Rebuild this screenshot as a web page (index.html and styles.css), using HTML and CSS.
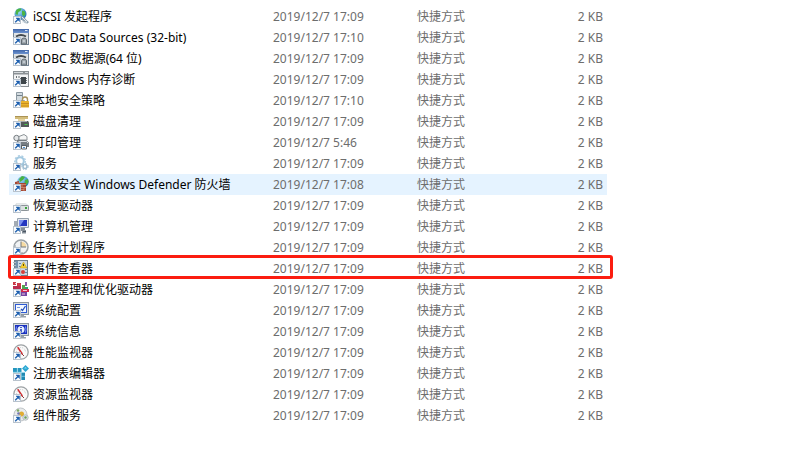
FILE: index.html
```
<!DOCTYPE html>
<html lang="zh-CN">
<head>
  <meta charset="UTF-8" />
  <meta name="viewport" content="width=device-width, initial-scale=1.0"/>
  <title>管理工具</title>
  <link rel="stylesheet" href="styles.css">
</head>
<body>

  <!-- Icon set -->
  <svg class="icon-set" aria-hidden="true">
    <defs>
      <linearGradient id="titleBlue" x1="0" y1="0" x2="0" y2="1">
        <stop offset="0" stop-color="#3f66aa"/>
        <stop offset="1" stop-color="#6d93cf"/>
      </linearGradient>
      <radialGradient id="globeFill" cx="35%" cy="30%" r="75%">
        <stop offset="0" stop-color="#a6e4f7"/>
        <stop offset="1" stop-color="#1468b8"/>
      </radialGradient>
      <symbol id="arrow" viewBox="0 0 16 16">
        <rect x="0.5" y="8.5" width="7" height="7" fill="#f9fbfd" stroke="#b9c3cd"/>
        <path d="M3 10h3.500v3.500z" fill="#1d5fae" stroke="#1d5fae" stroke-width="0.500"/>
        <path d="M5.200 11.300L2.200 14.300" stroke="#1d5fae" stroke-width="1.300"/>
      </symbol>
      <symbol id="iscsi" viewBox="0 0 16 16">
        <circle cx="7.500" cy="6" r="6" fill="url(#globeFill)"/>
        <path d="M3 2.500C4.500.8 7 .2 8.500.8L7.500 3 5.500 4l-1 3-2-1zM9 2.500l3 1 .5 3-2 2-1.500-2z" fill="#4cb544"/>
        <path d="M8 8l3 1 3 3.500 2 1.500-1.500 1.500-3-.500L9 12z" fill="#8da0ae"/>
        <path d="M9 9l5 5M9 14h5" stroke="#e1e9ef"/>
      </symbol>
      <symbol id="odbc" viewBox="0 0 16 16">
        <rect x="0.5" y="0.5" width="15" height="15" fill="#dfe3e6" stroke="#768797"/>
        <path d="M0 0h16v4H0z" fill="url(#titleBlue)"/>
        <path d="M12 1.500h2.500" stroke="#dbe7f8"/>
        <path d="M3 7.500q5-3 10 0" fill="none" stroke="#41484d" stroke-width="1.800"/>
        <path d="M8.500 15v-4q0-2 2.500-2t2.500 2v4z" fill="#9ea7ae" stroke="#616a71"/>
        <path d="M10 12h2" stroke="#e6eaed"/>
      </symbol>
      <symbol id="memory" viewBox="0 0 16 16">
        <rect x="0.5" y="0.5" width="15" height="15" fill="#f3f4f5" stroke="#8b9094"/>
        <path d="M0 0h16v3.500H0z" fill="#8b9195"/>
        <path d="M1 1.500h9M12 1.500h3" stroke="#d5d9dc"/>
        <path d="M3.500 5v2M6 5v2" stroke="#6a7276"/>
        <path d="M8 6h5v7H8z" fill="#3f464a"/>
        <path d="M7 7.500h1M7 9.500h1M13 7.500h1M13 9.500h1M13 11.500h1" stroke="#6d7478"/>
      </symbol>
      <symbol id="policy" viewBox="0 0 16 16">
        <path d="M3.500.5h6v8h-6z" fill="#d3dbe0" stroke="#8d9aa3"/>
        <path d="M4 3.500h5" stroke="#73818b"/>
        <path d="M1.500 8.500h10V13h-10z" fill="#b5c0c7" stroke="#93a0a8"/>
        <path d="M9.500 10V7.500a2.500 2.500 0 0 1 5 0V10" fill="none" stroke="#a7925c" stroke-width="1.400"/>
        <rect x="8" y="9" width="8" height="6.500" rx="0.5" fill="#e9b22b"/>
        <path d="M8 11.500h8M8 14h8" stroke="#c58e22"/>
      </symbol>
      <symbol id="cleanup" viewBox="0 0 16 16">
        <path d="M2 3h13v3H2z" fill="#d3bd7b"/>
        <path d="M2 3.500h13" stroke="#ab9354"/>
        <path d="M5 6h7v3H5z" fill="#e4d3a0"/>
        <path d="M1 8h14l1 1.500V14H0V9.500z" fill="#53595a"/>
        <path d="M2 8.500h12" stroke="#a5abab"/>
        <path d="M11.500 11.500h3" stroke="#4bc84b"/>
      </symbol>
      <symbol id="printer" viewBox="0 0 16 16">
        <circle cx="3.500" cy="4" r="2.700" fill="#e3e6e8" stroke="#757c80"/>
        <path d="M6 2.500L11 .5l3 2V6H6z" fill="#f5f6f6" stroke="#8c9397"/>
        <path d="M4 6h9l3 2.500V13H4z" fill="#777e83"/>
        <path d="M5.500 7.500h8l1.500 1.500" fill="none" stroke="#d9dde0"/>
        <path d="M8.500 11.500h5v3.500h-5z" fill="#f6f7f7" stroke="#555d63"/>
        <path d="M10 13.500h2" stroke="#4a92d6"/>
      </symbol>
      <symbol id="services" viewBox="0 0 16 16">
        <circle cx="7" cy="6" r="3.800" fill="#fff" stroke="#a4c9e0" stroke-width="2"/>
        <circle cx="7" cy="6" r="5.300" fill="none" stroke="#a4c9e0" stroke-width="1.200" stroke-dasharray="2 1.700"/>
        <circle cx="12" cy="11.500" r="2" fill="#fff" stroke="#9fbdd1" stroke-width="1.500"/>
        <circle cx="12" cy="11.500" r="3.200" fill="none" stroke="#9fbdd1" stroke-dasharray="1.500 1.500"/>
      </symbol>
      <symbol id="firewall" viewBox="0 0 16 16">
        <circle cx="10" cy="5.700" r="5.700" fill="url(#globeFill)"/>
        <path d="M6 3l3-3 3 1-2 3-3 2zM12 4l3-1 .5 3-2 3-2-2z" fill="#49b343"/>
        <path d="M2 6l4-1v2h7v8H2z" fill="#a34733"/>
        <path d="M2 8.500h11M8 11.500h5M5 6v2M9 8.500v3M11 11.500V15M8 13.500h3" stroke="#d8977e" stroke-width="0.700"/>
      </symbol>
      <symbol id="recovery" viewBox="0 0 16 16">
        <path d="M3 6.500h10l3 2.500v5H2V9z" fill="#bdc4c7"/>
        <path d="M3.500 6.500H13l2 2H3z" fill="#e8ebec"/>
        <rect x="7.500" y="8.500" width="8" height="5" rx="1" fill="#dadfe0" stroke="#8c9498"/>
        <path d="M12 10h2v2h-2z" fill="#39a33c"/>
      </symbol>
      <symbol id="computer" viewBox="0 0 16 16">
        <path d="M1 3h4v6H1z" fill="#a4acb5"/>
        <path d="M4.500.5h11v9h-11z" fill="#e4e9ee" stroke="#98a4b0"/>
        <path d="M6 2h8v6H6z" fill="#2437c0"/>
        <path d="M6 2h5L7 8H6z" fill="#7a90ee"/>
        <path d="M8 10h4v2h1v3.500H9V13H8z" fill="#848d97"/>
        <path d="M10 13.500h3" stroke="#495562"/>
      </symbol>
      <symbol id="scheduler" viewBox="0 0 16 16">
        <circle cx="8" cy="8" r="7" fill="#f1f3f4" stroke="#9aa1a6" stroke-width="1.500"/>
        <path d="M8 2.500a5.500 5.500 0 0 1 5.500 5.500H8z" fill="#f6dba3"/>
        <path d="M8 2.500V8h5" fill="none" stroke="#70777c"/>
        <path d="M9 13v1M3 7H2" stroke="#8c969d"/>
      </symbol>
      <symbol id="events" viewBox="0 0 16 16">
        <rect x="1.500" y="0.500" width="13" height="15" fill="#ccd8e3" stroke="#72818e"/>
        <path d="M2 1h3v8H2z" fill="#7491ad"/>
        <path d="M0 2.500h3M0 5.500h3" stroke="#b5bfc7"/>
        <path d="M6 3.500h2M6 6.500h2M12 9.500h2M12 12.500h2" stroke="#6386a8"/>
        <path d="M10.500 2l3.500 6H7z" fill="#f6ce2c" stroke="#bd9d22" stroke-width="0.500"/>
        <path d="M10.500 4v2" stroke="#55460a"/>
        <circle cx="10" cy="12" r="2" fill="#d6403a"/>
      </symbol>
      <symbol id="defrag" viewBox="0 0 16 16">
        <path d="M0 1h3v3H0zM4 2h4v3H4z" fill="#cc3947"/>
        <path d="M0 5h8v3H0z" fill="#b92c4e"/>
        <path d="M9 4h3v4H9z" fill="#54a54c"/>
        <path d="M12 1h2v4h-2z" fill="#8b5aa9"/>
        <path d="M8 8h8v3H8z" fill="#d42d4d"/>
        <path d="M12 6h3v2h-3z" fill="#32a06e"/>
        <path d="M8 11h6v4H8z" fill="#7547a5"/>
        <path d="M10 9.500h4M2 2.500h1M9 13h3" stroke="#f0c8d6"/>
      </symbol>
      <symbol id="config" viewBox="0 0 16 16">
        <rect x="0.5" y="0.5" width="15" height="12" fill="#d7dde2" stroke="#8d979f"/>
        <rect x="2.500" y="2.500" width="11" height="8" fill="#f5faff" stroke="#2f5bd3"/>
        <path d="M8 7l1.500 1.500L12.500 4" fill="none" stroke="#2451bd" stroke-width="1.300"/>
        <path d="M4 5.500h3" stroke="#7598e0"/>
        <path d="M8 13h3v1h2v1.500H8z" fill="#98a2aa"/>
      </symbol>
      <symbol id="info" viewBox="0 0 16 16">
        <rect x="0.5" y="0.5" width="15" height="12" fill="#d7dde2" stroke="#8d979f"/>
        <path d="M2 2h12v9H2z" fill="#1930bd"/>
        <circle cx="8" cy="6.500" r="3.500" fill="#e6efff"/>
        <path d="M8 4v1M8 6v3.500" stroke="#1737b7" stroke-width="1.500"/>
        <path d="M3.500 3.500q-1 3 0 6M12.500 3.500q1 3 0 6" fill="none" stroke="#7f9af5"/>
        <path d="M8 13h3v1h2v1.500H8z" fill="#98a2aa"/>
      </symbol>
      <symbol id="gauge" viewBox="0 0 16 16">
        <circle cx="8" cy="8" r="7.200" fill="#fafafa" stroke="#9da2a5" stroke-width="1.300"/>
        <path d="M3.500 8a4.500 4.500 0 0 1 9 0" fill="none" stroke="#c3c8ca" stroke-dasharray="1 1"/>
        <path d="M4 3.500l1.500-.5L10 9.500 8.500 10.500z" fill="#cf2f34"/>
        <path d="M9 10l2 2" stroke="#8b3738"/>
      </symbol>
      <symbol id="registry" viewBox="0 0 16 16">
        <path d="M0 3h4v4H0zM4.500 3h4v4h-4z" fill="#2596be"/>
        <path d="M0 7.500h12V15H0z" fill="#2189b2"/>
        <path d="M0 7.300h12M8.300 11.300H12M4.300 3v5M8.300 7v8" stroke="#9bdcf0" stroke-width="0.700"/>
        <path d="M12.500 0L16 3.500 12.500 7 9 3.500z" fill="#2ba6d2"/>
        <path d="M11 3.500L12.500 2 14 3.500z" fill="#8bdff2"/>
      </symbol>
      <symbol id="component" viewBox="0 0 16 16">
        <circle cx="7.500" cy="7.500" r="6.500" fill="#e9ebec" stroke="#c0c5c8"/>
        <circle cx="5" cy="3.500" r="1.300" fill="#7ca963"/>
        <circle cx="8.500" cy="7" r="2.500" fill="#e0ad35"/>
        <circle cx="5.500" cy="6.500" r="1.300" fill="#7275b3"/>
        <circle cx="12.500" cy="10.500" r="2.700" fill="#dde2e5" stroke="#b3babf"/>
        <circle cx="12.500" cy="10.500" r="1.200" fill="#6aa35d"/>
      </symbol>
    </defs>
  </svg>

  <main class="explorer">
    <table class="file-list" aria-label="管理工具">
      <colgroup>
        <col class="col-name">
        <col class="col-date">
        <col class="col-type">
        <col class="col-size">
      </colgroup>
      <tbody>
        <tr><td class="name"><svg class="icon"><use href="#iscsi"/><use href="#arrow"/></svg>iSCSI 发起程序</td><td>2019/12/7 17:09</td><td>快捷方式</td><td class="size">2 KB</td></tr>
        <tr><td class="name"><svg class="icon"><use href="#odbc"/><use href="#arrow"/></svg>ODBC Data Sources (32-bit)</td><td>2019/12/7 17:10</td><td>快捷方式</td><td class="size">2 KB</td></tr>
        <tr><td class="name"><svg class="icon"><use href="#odbc"/><use href="#arrow"/></svg>ODBC 数据源(64 位)</td><td>2019/12/7 17:09</td><td>快捷方式</td><td class="size">2 KB</td></tr>
        <tr><td class="name"><svg class="icon"><use href="#memory"/><use href="#arrow"/></svg>Windows 内存诊断</td><td>2019/12/7 17:09</td><td>快捷方式</td><td class="size">2 KB</td></tr>
        <tr><td class="name"><svg class="icon"><use href="#policy"/><use href="#arrow"/></svg>本地安全策略</td><td>2019/12/7 17:10</td><td>快捷方式</td><td class="size">2 KB</td></tr>
        <tr><td class="name"><svg class="icon"><use href="#cleanup"/><use href="#arrow"/></svg>磁盘清理</td><td>2019/12/7 17:09</td><td>快捷方式</td><td class="size">2 KB</td></tr>
        <tr><td class="name"><svg class="icon"><use href="#printer"/><use href="#arrow"/></svg>打印管理</td><td>2019/12/7 5:46</td><td>快捷方式</td><td class="size">2 KB</td></tr>
        <tr><td class="name"><svg class="icon"><use href="#services"/><use href="#arrow"/></svg>服务</td><td>2019/12/7 17:09</td><td>快捷方式</td><td class="size">2 KB</td></tr>
        <tr class="hovered"><td class="name"><svg class="icon"><use href="#firewall"/><use href="#arrow"/></svg>高级安全 Windows Defender 防火墙</td><td>2019/12/7 17:08</td><td>快捷方式</td><td class="size">2 KB</td></tr>
        <tr><td class="name"><svg class="icon"><use href="#recovery"/><use href="#arrow"/></svg>恢复驱动器</td><td>2019/12/7 17:09</td><td>快捷方式</td><td class="size">2 KB</td></tr>
        <tr><td class="name"><svg class="icon"><use href="#computer"/><use href="#arrow"/></svg>计算机管理</td><td>2019/12/7 17:09</td><td>快捷方式</td><td class="size">2 KB</td></tr>
        <tr><td class="name"><svg class="icon"><use href="#scheduler"/><use href="#arrow"/></svg>任务计划程序</td><td>2019/12/7 17:09</td><td>快捷方式</td><td class="size">2 KB</td></tr>
        <tr class="marked"><td class="name"><svg class="icon"><use href="#events"/><use href="#arrow"/></svg>事件查看器</td><td>2019/12/7 17:09</td><td>快捷方式</td><td class="size">2 KB</td></tr>
        <tr><td class="name"><svg class="icon"><use href="#defrag"/><use href="#arrow"/></svg>碎片整理和优化驱动器</td><td>2019/12/7 17:09</td><td>快捷方式</td><td class="size">2 KB</td></tr>
        <tr><td class="name"><svg class="icon"><use href="#config"/><use href="#arrow"/></svg>系统配置</td><td>2019/12/7 17:09</td><td>快捷方式</td><td class="size">2 KB</td></tr>
        <tr><td class="name"><svg class="icon"><use href="#info"/><use href="#arrow"/></svg>系统信息</td><td>2019/12/7 17:09</td><td>快捷方式</td><td class="size">2 KB</td></tr>
        <tr><td class="name"><svg class="icon"><use href="#gauge"/><use href="#arrow"/></svg>性能监视器</td><td>2019/12/7 17:09</td><td>快捷方式</td><td class="size">2 KB</td></tr>
        <tr><td class="name"><svg class="icon"><use href="#registry"/><use href="#arrow"/></svg>注册表编辑器</td><td>2019/12/7 17:09</td><td>快捷方式</td><td class="size">2 KB</td></tr>
        <tr><td class="name"><svg class="icon"><use href="#gauge"/><use href="#arrow"/></svg>资源监视器</td><td>2019/12/7 17:09</td><td>快捷方式</td><td class="size">2 KB</td></tr>
        <tr><td class="name"><svg class="icon"><use href="#component"/><use href="#arrow"/></svg>组件服务</td><td>2019/12/7 17:09</td><td>快捷方式</td><td class="size">2 KB</td></tr>
      </tbody>
    </table>
  </main>

</body>
</html>
```
FILE: styles.css
```
body {
  margin: 0;
  background: #fff;
  font-family: "Noto Sans", "Noto Sans CJK SC", sans-serif;
  font-size: 12px;
  color: #000;
}

.icon-set {
  position: absolute;
  width: 0;
  height: 0;
}

.explorer {
  padding: 6px 9px;
}

.file-list {
  width: 100%;
  max-width: 598px;
  table-layout: fixed;
  border-collapse: collapse;
  line-height: 21px;
  white-space: nowrap;
}

.col-date {
  width: 144px;
}

.col-type {
  width: 94px;
}

.col-size {
  width: 100px;
}

td {
  height: 21px;
  padding: 0 4px;
  color: #6d6d6d;
}

.name {
  color: #000;
}

.size {
  text-align: right;
}

.icon {
  width: 16px;
  height: 16px;
  margin: 2px 4px 0 0;
  vertical-align: top;
}

.hovered {
  background: #e5f3ff;
}

/* Red frame around the event viewer row */
.marked {
  position: relative;
}

.marked .name::after {
  content: "";
  position: absolute;
  inset: -3px -6px 0 -1px;
  border: 3px solid #fb1d10;
  border-radius: 3px;
  pointer-events: none;
}
```
